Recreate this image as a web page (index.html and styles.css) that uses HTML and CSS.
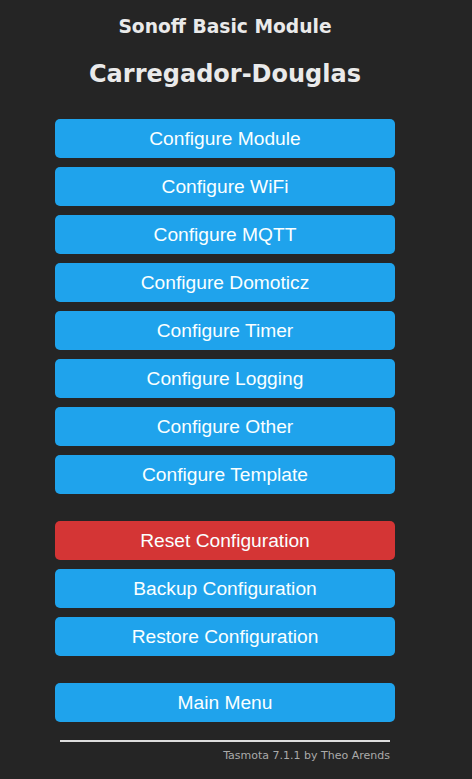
FILE: index.html
```html
<!DOCTYPE html>
<html>
<head>
    <meta charset="utf-8">
    <title>Sonoff Basic Module - Configuration</title>
    <link rel="stylesheet" href="styles.css">
</head>
<body>
<div class="main">
    <div class="header">
        <h3>Sonoff Basic Module</h3>
        <h2>Carregador-Douglas</h2>
    </div>

    <div class="group">
        <button>Configure Module</button>
        <button>Configure WiFi</button>
        <button>Configure MQTT</button>
        <button>Configure Domoticz</button>
        <button>Configure Timer</button>
        <button>Configure Logging</button>
        <button>Configure Other</button>
        <button>Configure Template</button>
    </div>

    <div class="group">
        <button class="bred">Reset Configuration</button>
        <button>Backup Configuration</button>
        <button>Restore Configuration</button>
    </div>

    <div class="group">
        <button>Main Menu</button>
    </div>

    <div class="footer">
        <hr>
        <span>Tasmota 7.1.1 by Theo Arends</span>
    </div>
</div>
</body>
</html>
```

FILE: styles.css
```css
body {
    margin: 0;
    background: #252525;
    color: #eaeaea;
    font-family: "DejaVu Sans", Verdana, sans-serif;
}
.main {
    width: 340px;
    padding: 0 0 0 55px;
    display: flex;
    flex-direction: column;
}
.header {
    text-align: center;
    padding-top: 15px;
}
.header h3 {
    margin: 0;
    font-size: 18.7px;
    line-height: 24px;
}
.header h2 {
    margin: 20px 0 0 0;
    font-size: 24px;
    line-height: 30px;
}
.group {
    display: flex;
    flex-direction: column;
    gap: 9px;
    margin-top: 27px;
}
.header + .group {
    margin-top: 30px;
}
button {
    width: 100%;
    height: 39px;
    border: 0;
    border-radius: 5px;
    background: #1fa3ec;
    color: #faffff;
    font-family: "Liberation Sans", Arial, sans-serif;
    font-size: 19.2px;
    padding: 0;
    cursor: pointer;
}
button.bred {
    background: #d43535;
}
.footer {
    text-align: right;
    font-size: 11px;
    color: #aaaaaa;
    padding: 0 5px;
}
.footer hr {
    margin: 18px 0 7px 0;
    border: 0;
    border-top: 2px solid #dddddd;
}
```
